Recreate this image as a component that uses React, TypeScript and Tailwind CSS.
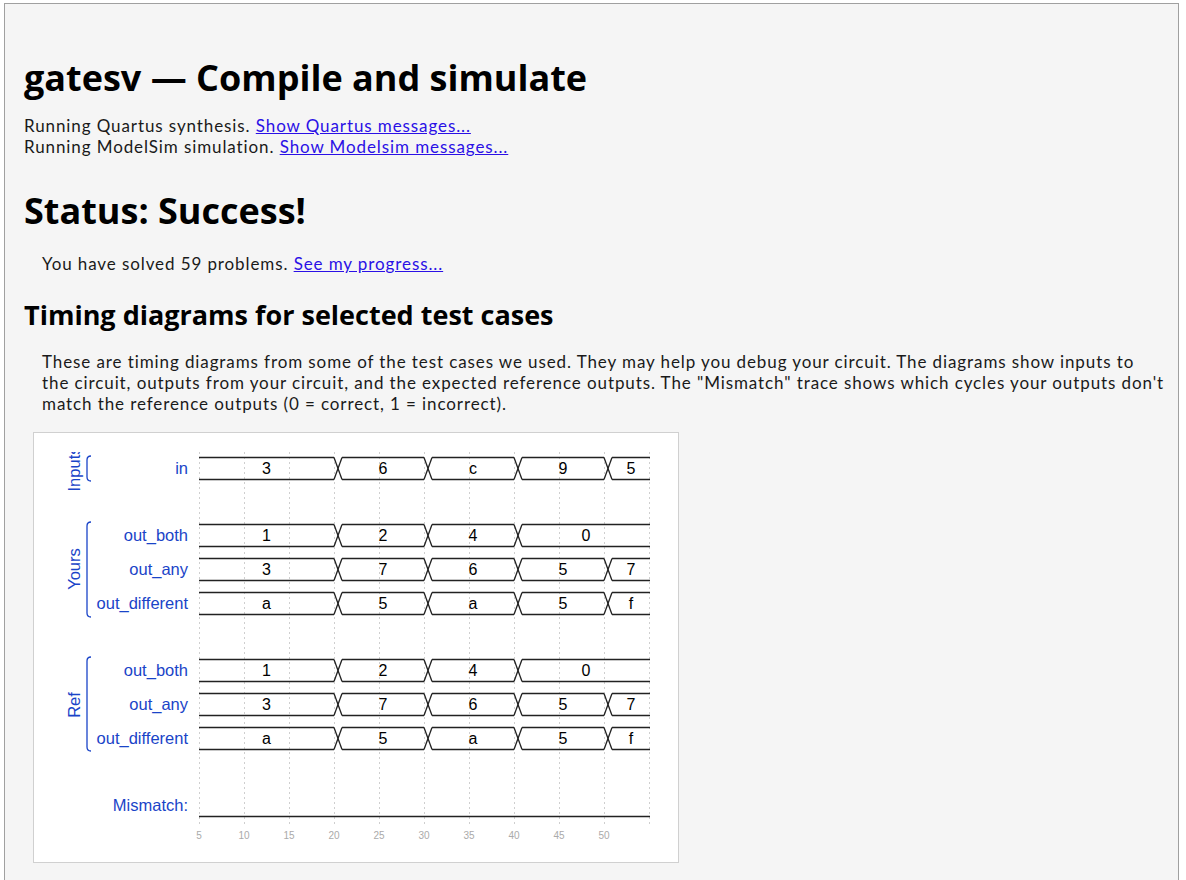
import type { ReactNode } from "react";

const LABEL = "#1a44c8";

// time -> page x
const tx = (t: number) => 199 + (t - 5) * 9;

type Wave = { name: string; y: number; vals: [number, string][] };

const rows: Wave[] = [
  { name: "in", y: 468.5, vals: [[5, "3"], [20, "6"], [30, "c"], [40, "9"], [50, "5"]] },
  { name: "out_both", y: 535.5, vals: [[5, "1"], [20, "2"], [30, "4"], [40, "0"]] },
  { name: "out_any", y: 569.5, vals: [[5, "3"], [20, "7"], [30, "6"], [40, "5"], [50, "7"]] },
  { name: "out_different", y: 603.5, vals: [[5, "a"], [20, "5"], [30, "a"], [40, "5"], [50, "f"]] },
  { name: "out_both", y: 670.5, vals: [[5, "1"], [20, "2"], [30, "4"], [40, "0"]] },
  { name: "out_any", y: 704.5, vals: [[5, "3"], [20, "7"], [30, "6"], [40, "5"], [50, "7"]] },
  { name: "out_different", y: 738.5, vals: [[5, "a"], [20, "5"], [30, "a"], [40, "5"], [50, "f"]] },
];

const END = 650;

function WaveRow({ w }: { w: Wave }) {
  const top = w.y - 11;
  const bot = w.y + 11;
  const parts: ReactNode[] = [];
  w.vals.forEach(([t, v], i) => {
    const x0 = tx(t);
    const xs = i === 0 ? x0 : x0 + 8;
    const next = w.vals[i + 1];
    const xe = next ? tx(next[0]) : END;
    parts.push(
      <g key={i}>
        {i > 0 && (
          <>
            <line x1={x0} y1={top} x2={x0 + 8} y2={bot} />
            <line x1={x0} y1={bot} x2={x0 + 8} y2={top} />
          </>
        )}
        <line x1={xs} y1={top} x2={xe} y2={top} />
        <line x1={xs} y1={bot} x2={xe} y2={bot} />
        <text
          x={(xs + xe) / 2}
          y={w.y + 5.5}
          textAnchor="middle"
          fill="#000"
          stroke="none"
          fontSize={16}
        >
          {v}
        </text>
      </g>
    );
  });
  return (
    <g>
      <text x={188} y={w.y + 5.5} textAnchor="end" fill={LABEL} stroke="none" fontSize={16.5}>
        {w.name}
      </text>
      <g stroke="#222" strokeWidth={1.3}>{parts}</g>
    </g>
  );
}

function Bracket({ y0, y1, label, cy }: { y0: number; y1: number; label: string; cy: number }) {
  return (
    <g>
      <path
        d={`M91 ${y0} Q87 ${y0} 87 ${y0 + 4} L87 ${y1 - 4} Q87 ${y1} 91 ${y1}`}
        fill="none"
        stroke={LABEL}
        strokeWidth={1.3}
      />
      <text
        x={0}
        y={0}
        transform={`translate(80 ${cy}) rotate(-90)`}
        textAnchor="middle"
        fill={LABEL}
        fontSize={16.5}
      >
        {label}
      </text>
    </g>
  );
}

function TimingDiagram() {
  const grid = Array.from({ length: 11 }, (_, k) => 199 + 45 * k);
  return (
    <div className="ml-[9px] mt-[18px] w-[646px] h-[431px] border border-[#d0d0d0] bg-white tracking-normal">
      <svg
        width={644}
        height={429}
        viewBox="34 433 644 429"
        style={{ fontFamily: "'Liberation Sans', Arial, sans-serif", letterSpacing: 0 }}
      >
        <defs>
          <clipPath id="clipTop">
            <rect x={34} y={452} width={644} height={420} />
          </clipPath>
        </defs>
        {grid.map((x) => (
          <line
            key={x}
            x1={x + 0.5}
            y1={452}
            x2={x + 0.5}
            y2={825}
            stroke="#cfcfcf"
            strokeWidth={1}
            strokeDasharray="2 3"
          />
        ))}
        {grid.slice(0, 10).map((x, k) => (
          <text key={x} x={x} y={839} textAnchor="middle" fill="#aaa" fontSize={10}>
            {5 + 5 * k}
          </text>
        ))}
        <g clipPath="url(#clipTop)">
          <Bracket y0={456} y1={481} label="Inputs" cy={469} />
        </g>
        <Bracket y0={522} y1={617} label="Yours" cy={569} />
        <Bracket y0={657} y1={751} label="Ref" cy={705} />
        {rows.map((w, i) => (
          <WaveRow key={i} w={w} />
        ))}
        <text x={188} y={811} textAnchor="end" fill={LABEL} fontSize={16.5}>
          Mismatch:
        </text>
        <line x1={199} y1={816.5} x2={END} y2={816.5} stroke="#222" strokeWidth={1.3} />
      </svg>
    </div>
  );
}

function A({ children }: { children: ReactNode }) {
  return <a href="#" className="text-[#2a10e6] underline">{children}</a>;
}

export default function App() {
  return (
    <div className="min-h-[880px] bg-white pl-[4px] pt-[3px] pr-[7px]">
      <div
        className="min-h-[900px] border border-[#a0a0a0] bg-[#f5f5f5] px-[19px] pt-[50px] text-[17px] leading-[21px] tracking-[0.9px] text-[#1a1a1a]"
        style={{ fontFamily: "Lato, 'Noto Sans', sans-serif" }}
      >
        <h1 className="font-['Open_Sans',sans-serif] text-[36px] font-bold leading-[48px] tracking-normal text-black">
          gatesv — Compile and simulate
        </h1>
        <div className="mt-[13px]">
          Running Quartus synthesis. <A>Show Quartus messages...</A>
          <br />
          Running ModelSim simulation. <A>Show Modelsim messages...</A>
        </div>
        <h2 className="mt-[30px] font-['Open_Sans',sans-serif] text-[36px] font-bold leading-[48px] tracking-normal text-black">
          Status: Success!
        </h2>
        <p className="mt-[18px] pl-[18px]">
          You have solved 59 problems. <A>See my progress...</A>
        </p>
        <h3 className="mt-[23px] font-['Open_Sans',sans-serif] text-[27px] font-bold leading-[36px] tracking-normal text-black">
          Timing diagrams for selected test cases
        </h3>
        <p className="mt-[18px] whitespace-nowrap pl-[18px]">
          These are timing diagrams from some of the test cases we used. They may help you debug
          your circuit. The diagrams show inputs to
          <br />
          the circuit, outputs from your circuit, and the expected reference outputs. The
          "Mismatch" trace shows which cycles your outputs don't
          <br />
          match the reference outputs (0 = correct, 1 = incorrect).
        </p>
        <TimingDiagram />
      </div>
    </div>
  );
}
